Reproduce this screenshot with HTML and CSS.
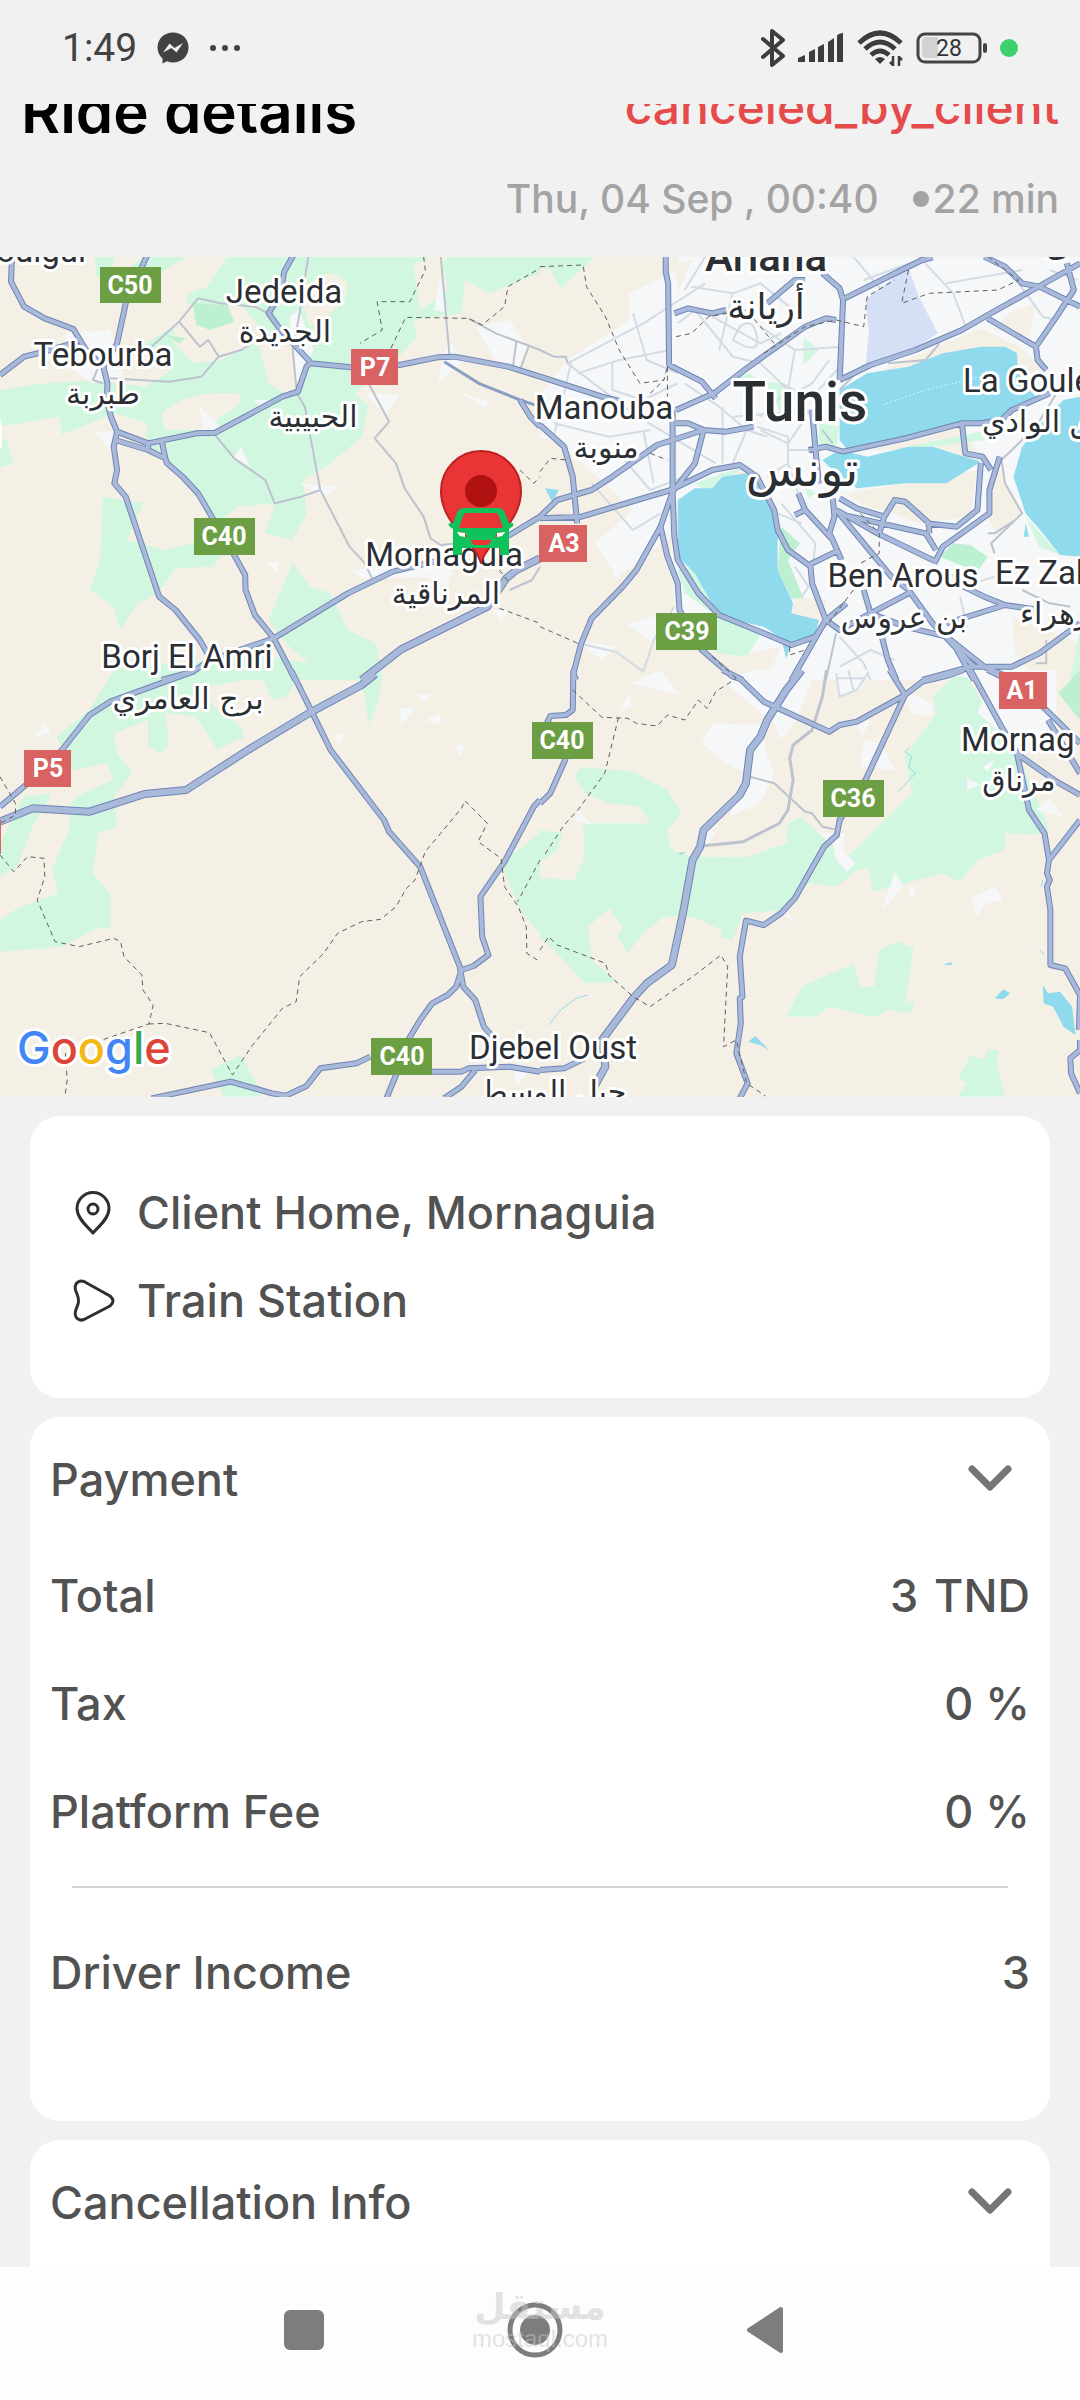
FILE: index.html
```html
<!DOCTYPE html>
<html lang="en">
<head>
<meta charset="utf-8">
<meta name="viewport" content="width=device-width, initial-scale=1">
<title>Ride details</title>
<link rel="stylesheet" href="styles.css">
</head>
<body>
<div class="status-bar">
  <div class="status-left">
    <span class="clock">1:49</span>
    <svg width="32" height="32" viewBox="0 0 32 32"><path fill="#424242" d="M16 0.500C7 .5.500 7 .500 15.500c0 4.500 2 8.500 5 11v5l4.500-2.200c2 .8 4 1.200 6 1.200 9 0 15.500-6.500 15.500-15S25 .500 16 .500z"/><path fill="#f1f1f1" d="M6 20.500l6.500-9 5 4.500L26 11l-6.500 9.500-5-4.500z"/></svg>
    <svg width="32" height="8" viewBox="0 0 32 8" fill="#424242"><circle cx="4" cy="4" r="3"/><circle cx="16" cy="4" r="3"/><circle cx="28" cy="4" r="3"/></svg>
  </div>
  <div class="status-right">
    <svg width="26" height="40" viewBox="0 0 26 40"><path d="M3 11l20 17-11 9V3l11 9L3 29" fill="none" stroke="#3d3d3d" stroke-width="4" stroke-linejoin="round" stroke-linecap="round"/></svg>
    <svg width="46" height="30" viewBox="0 0 46 30" fill="#3d3d3d"><path d="M0 29v-4l7-3v7zM11 29V19l6-3v13zM20 29V14l6-3v18zM30 29V9l6-4v24zM39 29V3q0-2 6-3v29z"/></svg>
    <svg width="48" height="38" viewBox="0 0 48 38" fill="none" stroke="#3d3d3d" stroke-width="5"><path d="M3 14Q24-6 45 14M9 20Q24 6 39 20M15 26q9-8 18 0"/><path d="M24 35l-5-5q5-4 10 0z" fill="#3d3d3d" stroke="none"/><path d="M37 27v10M43 27v10M34 33l3 3M43 28l3 3" stroke-width="2.500"/></svg>
    <svg class="battery" width="72" height="34" viewBox="0 0 72 34"><rect x="2" y="3" width="62" height="28" rx="7" fill="none" stroke="#454545" stroke-width="3"/><path d="M10 6h12v21H10q-4 0-4-4V10q0-4 4-4z" fill="#d2d2d2"/><rect x="67" y="12" width="4" height="10" rx="2" fill="#454545"/><text x="33" y="25" text-anchor="middle">28</text></svg>
    <span class="live-dot"></span>
  </div>
</div>

<main class="screen">
  <header class="ride-head">
    <div class="head-row">
      <h1>Ride details</h1>
      <span class="ride-status">canceled_by_client</span>
    </div>
    <div class="ride-meta"><span>Thu, 04 Sep , 00:40</span><span class="duration"><i class="bullet"></i>22 min</span></div>
  </header>

  <svg class="map" viewBox="0 257 1080 840" preserveAspectRatio="xMidYMid slice" role="img" aria-label="Map around Mornaguia and Tunis">
    <defs>
      <g id="roads">
        <svg class="tile" x="0" y="250" width="540" height="430" viewBox="0 0 1568 1290" preserveAspectRatio="none">
          <path d="M35 10L32 95 70 170 130 205 213 237 250 300 300 350 312 400 310 450 322 500 340 545 430 580 570 550 625 548 820 440 865 425 890 350 900 340 1020 352 1160 345 1270 322 1320 320 1475 350 1568 380M430 10L408 60 365 160 340 280 300 350M0 375L70 320 130 305 210 280 250 300M855 10L825 65 815 130 780 190 815 240 900 335M340 545L330 590 340 660 332 700 365 740 462 1040 510 1080 580 1170 605 1215M335 570L430 600 480 625 485 640 530 680 575 730 615 800 680 915 712 975 713 1020 740 1095 795 1165 858 1290M430 580V600M470 575L480 625M470 1290L560 1265 610 1230 795 1165 1010 1030 1140 965 1300 925 1480 855 1568 800M1510 450L1540 500 1568 530"/>
        </svg>
        <svg class="tile" x="540" y="250" width="540" height="430" viewBox="0 0 1568 1290" preserveAspectRatio="none">
          <path d="M365 10V65L372 100 375 345 470 395 510 445M395 480L505 430 600 355 770 230 830 205 860 210M390 190L430 175 500 190 540 180M660 160L740 90 770 90M820 70L870 115 880 150 870 390M885 145L1050 60 1110 30 1140 22M870 390L960 345 1090 300 1225 240 1300 195 1430 120 1568 40M1290 20L1350 50 1400 100 1450 110 1568 170M1300 205L1440 290 1445 330 1470 360M1440 290L1500 200 1550 120 1530 40M0 380L180 440 240 455M0 525L70 590 95 680 108 820M0 805L120 800 380 720 500 660 580 645 630 680 680 780 690 840 720 900 780 945 860 905M0 800L50 750 150 720 210 680 340 585 475 540 540 545 620 530M395 520L430 520 475 540 450 640 385 725M385 480V725L390 860 400 930 460 1030 520 1095 650 1150 730 1185 800 1160 830 1110 790 1000 785 945M385 725L350 830 280 960 240 1010 150 1105 120 1180 97 1270 105 1290M350 830L370 920 400 1000 405 1080 470 1200 560 1280 590 1290M790 480L800 600 810 700M780 600L830 590 880 605 1060 565 1225 520 1280 520 1340 510 1370 480 1480 430M1225 520L1235 610 1285 620 1310 660M1335 620L1305 720 1305 790 1170 890 1145 940M1280 640L1270 780 1210 830 1120 820M750 730L770 780 850 870 875 930M740 795L770 780M850 745L855 800 840 850 850 870M870 745L920 775 1000 800M860 780L980 850 1150 935M860 780L1020 980 1070 1020 1140 1120 1260 1250M985 850L1000 800 1030 750 1060 755 1130 820V850M880 795L1120 850 1150 900M830 1110L870 1140 960 1090 1070 1030M940 1020L960 1090 1060 1130 1180 1160 1290 1250 1380 1290M730 1290L830 1110 890 1060M990 1150L1010 1230 1035 1290M1110 1290L1250 1250 1370 1250 1450 1210 1568 1120M1230 1010L1290 1040 1350 1065 1450 1080M1180 1120L1350 1065M1200 1180L1260 1290"/>
        </svg>
        <svg class="tile" x="0" y="670" width="540" height="430" viewBox="0 0 1568 1290" preserveAspectRatio="none">
          <path d="M0 410L75 345 180 240 260 135 320 95 560 5M845 0L905 125 960 240 1115 450 1130 485 1220 590 1335 890 1345 950 1380 990 1405 1070 1430 1100M1568 390L1550 410 1465 575 1395 680 1400 800 1418 855 1375 888 1340 900 1325 950 1300 975 1255 1000 1220 1050 1185 1110 1150 1215 1120 1290M440 1285L670 1235 790 1270 830 1277 890 1248 930 1195 1035 1180 1075 1160M1250 1205L1340 1205 1360 1195 1480 1190 1568 1205M1380 1200L1340 1250 1290 1285"/>
        </svg>
        <svg class="tile" x="540" y="670" width="540" height="430" viewBox="0 0 1568 1290" preserveAspectRatio="none">
          <path d="M97 0L95 120 75 135 30 138 20 160M75 265L30 370 0 400M530 0L580 25 650 95 840 185 870 165 920 155 1060 75 1110 35 1190 15 1230 0M0 1200L70 1195 130 1165M1015 0L1060 75 945 330 870 450 862 495 825 530 740 685 700 730 650 765 598 752 580 860 588 980 580 985 583 1060 570 1150 603 1240 580 1285M1250 0L1340 170 1385 250 1420 420 1465 490 1478 570 1472 610 1480 630 1472 650 1482 720V885L1525 895 1568 975 1565 1080M1478 570L1568 450M1568 1110V1140L1540 1165 1542 1210 1568 1270M1390 255L1500 335 1568 375M1300 0L1400 50 1480 130 1568 220M1475 150L1568 310"/>
        </svg>
      </g>
      <g id="highways">
        <svg class="tile" x="0" y="250" width="540" height="430" viewBox="0 0 1568 1290" preserveAspectRatio="none">
          <path d="M1050 1290L1165 1198 1415 1070 1470 985 1500 960 1568 925"/>
        </svg>
        <svg class="tile" x="0" y="670" width="540" height="430" viewBox="0 0 1568 1290" preserveAspectRatio="none">
          <path d="M0 455L95 415 260 425 420 372 540 360 720 240 905 125 1050 45 1090 12"/>
        </svg>
        <svg class="tile" x="540" y="670" width="540" height="430" viewBox="0 0 1568 1290" preserveAspectRatio="none">
          <path d="M760 0L715 60 660 150 640 200 610 240 598 340 580 375 475 480 465 530 443 570 415 730 383 885 310 940 270 985 180 1110 190 1190 155 1255"/>
        </svg>
      </g>
    </defs>

    <rect class="land" x="0" y="257" width="1080" height="840"/>

    <!-- land cover, water and small streets, north-west -->
    <svg class="tile" x="0" y="250" width="540" height="430" viewBox="0 0 1568 1290" preserveAspectRatio="none">
      <path class="park" d="M275 20H335L320 60 280 85ZM350 70L420 20H545L480 60 400 90 370 110ZM660 20H1240L1250 100 1300 20 1568 20V70L1420 130 1350 90 1340 190 1200 210 1210 260 1150 330 1030 430 1070 470 1050 560 960 640 880 690 890 790 850 870 770 850 800 760 690 770 620 830 600 780 560 700 480 640 420 580 430 520 330 490 180 555 170 500 0 530V420L130 400 270 390 420 410 500 360 450 330 420 280 520 220 550 130 600 110ZM0 560L20 570 38 640 0 655ZM300 740L415 760 370 870 480 900 560 880 650 900 620 950 510 955 460 1030 400 1060 350 1140 330 1070 260 1020 290 930ZM850 940L900 1010 960 1030 1010 1140 1090 1180 1110 1290H340L350 1250 780 1220 900 1240 830 1180 780 1110Z"/>
      <path class="land" d="M470 490Q540 420 690 430 720 460 640 500L600 540 480 540ZM750 280L850 260 880 400 840 440 780 400ZM870 130Q950 30 1010 100L1000 160 900 230ZM520 160L700 165 780 260 640 330 560 340 500 270ZM1200 40L1280 20 1300 120 1220 180Z"/>
      <path class="wood" d="M560 160L660 165 680 215 610 240 570 225ZM480 255L540 265 520 280Z"/>
      <path class="town" d="M190 250L320 240 360 380 270 400 180 340ZM1380 230L1480 210 1530 290 1500 360 1440 330ZM1280 80L1300 190 1260 180ZM1300 270L1350 330 1270 400ZM840 200L870 180 910 300 860 400ZM580 470L650 540 590 540ZM700 590L725 650 675 630ZM870 700L985 710 940 740ZM1060 430L1160 435 1120 495ZM1340 430L1420 455 1410 475ZM775 940L810 935 805 970ZM1020 960L1320 930 1300 1010 1230 980 1050 985ZM275 545L330 545 325 610ZM1430 1080L1480 1080 1455 1115ZM740 450L820 450 760 480Z"/>
      <path class="street" d="M895 20L870 190 850 300 862 430 885 470 930 720 1015 890 1060 940 1080 985M1280 20L1305 315M440 290L520 215 575 145 640 160 740 170 780 190M520 215L580 290 605 270 635 320 700 300 780 250M320 385L490 395 585 380 635 320M625 555L680 625 770 690 798 760 875 740 930 720M1070 400L1130 515 1088 565 1150 640 1175 715 1230 800 1250 865 1280 885 1330 880M1360 205L1440 250 1530 285 1568 300M1500 270L1490 345M1535 290L1510 360M1480 1020L1545 990 1568 950M290 340L270 390 300 400"/>
      <path class="street-blue" d="M1290 335L1390 400 1510 450 1568 470"/>
    </svg>

    <!-- north-east -->
    <svg class="tile" x="540" y="250" width="540" height="430" viewBox="0 0 1568 1290" preserveAspectRatio="none">
      <path class="park" d="M0 20H160L120 60 60 115 30 60 0 50Z"/>
      <path class="town" d="M400 20H1568V1290H620L520 1180 390 1100 330 1180 250 1120 210 960 160 880 270 780 60 580 0 560V440L80 330 260 210 260 130 400 60ZM100 1170L220 1190 180 1230Z"/>
      <path class="land" d="M390 40L440 30 400 130ZM720 20H760L740 60 700 40ZM1360 190L1440 160 1420 260 1320 240ZM900 400L1280 235 1390 290 1460 350 1400 450 1200 350ZM890 730L1060 700 1270 660 1250 800 1100 820 1000 780 940 770ZM900 600L1100 540 1225 530 1290 640 1180 600ZM740 1040L830 1050 820 1120 730 1100ZM1370 1100L1568 1180V1290H1440L1380 1210ZM200 1000L380 860 390 1080 230 1130ZM560 1220L700 1190 660 1290H580ZM1330 650L1400 790 1330 860 1300 800ZM460 700L600 660 640 690 500 740Z"/>
      <path class="park" d="M765 260L810 300 765 345ZM560 380L610 370 640 395 710 400 700 490 660 420ZM810 520L870 530 860 590 810 600ZM400 960L450 950 530 1100 650 1140 600 1220 510 1210 500 1090 420 1030ZM450 700L530 670 600 650 480 720ZM1060 590L1280 545 1290 570 1140 590ZM1410 800L1510 915 1450 890ZM1568 1130L1540 1290H1568ZM760 690L800 730 780 745Z"/>
      <path class="wood" d="M700 830L755 880 720 930 765 1045 730 1045 690 960ZM1200 880L1250 885 1300 920 1270 965 1160 920Z"/>
      <path class="airport" d="M1030 80L1070 55 1100 140 1155 250 1080 300 945 345 955 250 945 150Z"/>
      <path class="water" d="M870 420L950 370 1070 350 1170 310 1280 290 1350 290 1385 310 1388 370 1440 440 1370 470 1340 510 1225 515 1060 570 900 610 870 570ZM820 630L870 600 950 620 1070 590 1140 590 1280 635 1180 700 1060 700 920 715 850 660ZM1400 590L1480 490 1520 450 1568 440V920L1510 915 1460 850 1410 790 1375 680ZM400 750L450 715 500 715 530 680 600 670 640 690 670 740 690 850 690 960 735 1060 730 1090 810 1110 800 1150 730 1185 650 1130 520 1100 450 970 400 920ZM15 715L55 720 35 755ZM1410 820L1420 860 1405 860ZM705 1185H730L715 1225Z"/>
      <path class="alley" d="M80 340L300 220 480 100M80 340L270 490 510 640M90 340L40 560M110 370L230 330 380 300M210 340V420L300 450 400 400M270 190L310 330 400 370M420 120L480 20M400 220L450 180 560 320 640 340 700 400 760 430M440 110L560 130 640 100 760 200M560 130L520 300M580 230Q620 200 630 260T560 270ZM500 200L640 280 700 250M640 230L740 300 880 290M740 300L720 420 640 500M840 330L790 400 720 440M880 340L800 430M420 400L520 470 600 540 660 560M530 470V640M600 540L560 640M630 530L720 560V640L660 680M720 600H800M560 500L800 480M640 540L720 580 760 520M700 400L790 500M910 20L1000 130M940 90L1100 30M1100 20L1200 130 1240 240M1180 100L1400 60M1390 100L1460 200 1500 210M1480 60L1560 90M220 600L320 720 420 680M150 700L270 840 350 790M300 540L330 700M40 520L200 560 320 540M720 640L760 760M700 760L800 880 790 960M740 950L780 1010 760 1040M690 790L760 820M870 1160L940 1240 960 1290M870 1250L960 1200 1030 1230M1160 960L1260 1000 1380 960M1220 1040L1240 1130M110 1180L220 1205 300 1265 330 1170 390 1070"/>
      <path class="street" d="M0 300L40 320 75 320 80 340M1340 630L1350 700 1400 790 1310 880 1320 910M1300 850H1320L1380 810M860 1150L830 1290M1010 340L1120 330 1160 280M940 345L870 420M820 540L850 580M1330 640L1440 530 1500 430M1400 1020L1480 1060 1540 1070M1440 1240H1470V1170"/>
      <path class="ferry" d="M995 465L1120 420 1300 375"/>
    </svg>

    <!-- south-west -->
    <svg class="tile" x="0" y="670" width="540" height="430" viewBox="0 0 1568 1290" preserveAspectRatio="none">
      <path class="park" d="M330 0H1110L1100 90 1070 165 1060 80 1030 20 870 20 830 80 790 90 760 20 600 50 620 110 700 170 710 200 630 240 570 140 480 130 490 220 470 250 430 230 430 150 330 190 340 250 385 310 330 380 340 470 285 490 270 610 320 670V780L290 770 180 830 0 845V750L50 715 170 670 150 600 200 480 205 400 240 370 330 330 310 280 210 300 165 200 260 120ZM70 380L150 370 90 480 50 590 0 620V520ZM610 1200L700 1155 740 1230 760 1280H650ZM1568 490L1455 580 1510 720 1568 790Z"/>
      <path class="town" d="M130 160L150 185 98 205ZM1160 115L1210 112 1165 165ZM1235 150L1280 130V165ZM1320 230L1350 222 1340 260ZM970 195L1000 190 985 225ZM1210 75L1250 72 1232 100ZM1490 1180L1540 1200 1500 1250Z"/>
    </svg>

    <!-- south-east -->
    <svg class="tile" x="540" y="670" width="540" height="430" viewBox="0 0 1568 1290" preserveAspectRatio="none">
      <path class="park" d="M100 320L120 290 270 305 370 360 410 430 370 480 380 540 440 560 600 562 715 520 720 460 760 440 860 540 900 555 1000 450 1080 370 1060 260 1150 130 1140 80 1200 20H1240L1280 90 1320 180 1400 280 1480 480 1440 495 1350 490V540L1270 570 1220 635 1170 610 1100 630 965 665 955 595 920 600 860 650 780 640 700 720 590 730 560 810 520 800 530 780 440 740 360 740 300 790 255 850 225 800 240 770 200 715 140 770 150 870 225 935 130 940 50 850 0 800V625L100 630 130 560 125 460 320 460 290 410 200 400 130 370ZM0 480L65 490 50 540 0 575ZM715 1040L760 950 910 880 930 950 970 950 985 840 1040 815 1085 835 1060 1000 1090 995 1075 1030 1010 1020 975 1042 840 1010 800 1040ZM1250 1155L1290 1170 1300 1140H1330V1200L1350 1280H1210L1240 1240 1215 1225Z"/>
      <path class="wood" d="M1568 0L1505 70 1568 150Z"/>
      <path class="town" d="M540 30L620 0H800L750 140 700 210 680 160 560 60ZM500 160L640 165 660 260 680 310 640 400 550 440 600 310 540 280 470 220ZM850 0H960L930 60 870 80ZM940 210L990 220 1030 300 930 290ZM1050 60L1140 100V140L1080 130ZM1260 0H1500V240L1480 230 1380 240 1330 180 1270 130 1290 80ZM810 490L885 490 880 540 915 580 890 605 860 570 850 520ZM1030 605L1055 650 995 720ZM1070 640L1095 665 1075 685ZM1320 650L1345 690 1295 700 1270 740 1250 685ZM350 0L405 75 265 40ZM260 70L265 110 230 120ZM110 420L150 465 100 450ZM1480 385L1520 440 1440 420ZM1240 325L1280 345 1240 360ZM1320 270L1300 305 1285 290ZM715 720L745 760 715 740ZM480 470L510 490 480 530ZM920 160L960 150 935 200Z"/>
      <path class="water" d="M1460 945L1475 970 1510 965 1545 1010 1555 1095 1520 1070 1490 1010 1462 1000ZM1320 985L1345 958 1365 970 1345 988ZM605 1115L625 1098 665 1140 640 1125ZM1170 885L1195 875V885ZM400 550L425 546 410 554Z"/>
      <path class="stream" d="M25 1065L60 1020 105 985 138 975M1040 365L1090 310 1070 290 1080 260 1060 245 1075 230M1450 840L1465 852M1460 630L1456 650"/>
      <path class="street wide" d="M832 0L820 80 790 180 735 225 725 265 735 330 720 420 695 460 590 515 470 528"/>
      <path class="street" d="M610 320L680 340 770 425 790 430 820 470 855 478"/>
      <path class="alley" d="M860 10L870 80 920 60 955 5M865 25H940M895 0L910 60"/>
    </svg>

    <use href="#roads" class="casing"/>
    <use href="#highways" class="casing-major"/>
    <use href="#roads" class="fill"/>
    <use href="#highways" class="fill-major"/>

    <!-- district borders -->
    <svg class="tile border" x="0" y="250" width="540" height="430" viewBox="0 0 1568 1290" preserveAspectRatio="none"><path d="M1230 20L1235 60 1190 155 1095 155 1110 240 1045 280M1135 295L1178 202 1360 205 1400 225 1465 170 1475 110 1568 55M1510 660L1550 700 1568 680M1450 960L1480 1000M1450 1075L1568 1120"/></svg>
    <svg class="tile border" x="540" y="250" width="540" height="430" viewBox="0 0 1568 1290" preserveAspectRatio="none"><path d="M0 50L125 45 135 110 190 200 230 300 290 400 360 390 370 350M370 350V440M320 430L360 390M395 260L440 250 490 200 600 180 680 280M650 310L770 230 860 210 940 230 950 140 1030 90M1070 60L1050 160 1130 130 1330 120 1390 90 1300 20M930 790L985 850V910L930 940M0 1130L110 1180M320 610L370 630M0 665L30 625 80 630M725 1190V1215L770 1200M910 1020L830 1130M500 1220L570 1285"/></svg>
    <svg class="tile border" x="0" y="670" width="540" height="430" viewBox="0 0 1568 1290" preserveAspectRatio="none"><path d="M0 320L45 400V435L0 460M0 555L40 605 80 560 128 565 130 620 108 690 160 815 230 830 330 805 350 815 360 860 412 915 415 960 445 1005 432 1062 310 1105 190 1150 195 1230 188 1285M432 1062L480 1060 608 1088 675 1215 730 1130 820 1015 860 995 870 920 940 850 980 790 1050 755 1105 748 1150 710 1180 655 1205 630 1235 545 1340 415 1350 392 1415 460 1388 515 1455 565 1465 650 1505 710 1528 770 1530 850 1560 870M1568 570L1503 695"/></svg>
    <svg class="tile border" x="540" y="670" width="540" height="430" viewBox="0 0 1568 1290" preserveAspectRatio="none"><path d="M95 60L180 142 255 145 280 160 340 168 370 135 420 150 460 90 485 115 510 65 570 25M228 142L188 310 110 420 70 465 10 560M0 840L25 800 50 825 190 880 200 915 270 980 320 1010 450 915 525 855 545 890 533 1130 570 1110 600 1240 655 1278"/></svg>

    <g class="place">
      <text x="86" y="262" text-anchor="end">Chouigui</text>
      <text x="284" y="303" text-anchor="middle">Jedeida</text>
      <text x="103" y="366" text-anchor="middle">Tebourba</text>
      <text x="604" y="419" text-anchor="middle">Manouba</text>
      <text x="963" y="392">La Goulette</text>
      <text x="903" y="587" text-anchor="middle">Ben Arous</text>
      <text x="995" y="584">Ez Zahra</text>
      <text x="961" y="751">Mornag</text>
      <text x="444" y="566" text-anchor="middle">Mornaguia</text>
      <text x="187" y="668" text-anchor="middle">Borj El Amri</text>
      <text x="553" y="1059" text-anchor="middle">Djebel Oust</text>
    </g>
    <g class="place place-ar" lang="ar">
      <text x="285" y="342" text-anchor="middle">الجديدة</text>
      <text x="103" y="404" text-anchor="middle">طبربة</text>
      <text x="313" y="427" text-anchor="middle">الحبيبية</text>
      <text x="606" y="458" text-anchor="middle">منوبة</text>
      <text x="766" y="319" text-anchor="middle" class="suburb-ar">أريانة</text>
      <text x="982" y="432">حلق الوادي</text>
      <text x="904" y="628" text-anchor="middle">بن عروس</text>
      <text x="1020" y="624">الزهراء</text>
      <text x="1019" y="791" text-anchor="middle">مرناق</text>
      <text x="446" y="604" text-anchor="middle">المرناقية</text>
      <text x="188" y="709" text-anchor="middle">برج العامري</text>
      <text x="553" y="1102" text-anchor="middle">جبل الوسط</text>
      <text x="-7" y="446">ا</text>
      <text x="1046" y="256">ى</text>
    </g>
    <g class="place city">
      <text x="766" y="271" text-anchor="middle" class="suburb">Ariana</text>
      <text x="800" y="421" text-anchor="middle">Tunis</text>
      <text x="802" y="486" text-anchor="middle" class="city-ar" lang="ar">تونس</text>
    </g>

    <g class="shield shield-c">
      <rect x="100" y="267" width="61" height="36"/><text x="130" y="294">C50</text>
      <rect x="194" y="518" width="61" height="37"/><text x="224" y="545">C40</text>
      <rect x="656" y="613" width="61" height="37"/><text x="687" y="640">C39</text>
      <rect x="532" y="722" width="61" height="37"/><text x="562" y="749">C40</text>
      <rect x="823" y="780" width="61" height="37"/><text x="853" y="807">C36</text>
      <rect x="371" y="1038" width="61" height="37"/><text x="402" y="1065">C40</text>
    </g>
    <g class="shield shield-p">
      <rect x="351" y="349" width="47" height="36"/><text x="375" y="376">P7</text>
      <rect x="539" y="525" width="48" height="37"/><text x="564" y="552">A3</text>
      <rect x="24" y="750" width="47" height="37"/><text x="48" y="777">P5</text>
      <rect x="999" y="672" width="48" height="37"/><text x="1022" y="699">A1</text>
      <rect x="0" y="820" width="1" height="34"/>
    </g>

    <!-- pickup pin with the car on top -->
    <path d="M481 563C474 540 441 524 441 491a40 40 0 0 1 80 0c0 33-33 49-40 72z" fill="#e93535" stroke="#bd2020" stroke-width="2"/>
    <circle cx="481" cy="491" r="16" fill="#b01111"/>
    <path fill="#0fc25c" fill-rule="evenodd" d="M464 508h34q5 0 7 5l4 10h3q2 0 1 3l-4 3v26h-9v-7h-38v7h-9v-26l-4-3q-1-3 1-3h3l4-10q2-5 7-5zM466 513q-2 0-3 3l-4 12h44l-4-12q-1-3-3-3zM457 532l3 4 7 1-2-4zM505 532l-3 4-7 1 2-4zM470 540l4 5h14l4-5z"/>
    <path fill="#fff" d="M457 532l3 4 5 1v-4zM505 532l-3 4-5 1v-4z"/>

    <text class="logo" x="17" y="1064"><tspan fill="#4285f4">G</tspan><tspan fill="#db4437">o</tspan><tspan fill="#f4b714">o</tspan><tspan fill="#4285f4">g</tspan><tspan fill="#35a853">l</tspan><tspan fill="#db4437">e</tspan></text>
  </svg>

  <div class="cards">
    <section class="card route">
      <div class="stop">
        <svg width="48" height="48" viewBox="0 0 48 48" fill="none" stroke="#2f2f2f" stroke-width="3"><path d="M24 44C20 39 8 30 8 19.500a16 16 0 0 1 32 0C40 30 28 39 24 44z" stroke-linejoin="round"/><circle cx="24" cy="20" r="5"/></svg>
        <span>Client Home, Mornaguia</span>
      </div>
      <div class="stop">
        <svg width="48" height="48" viewBox="0 0 48 48" fill="none" stroke="#2f2f2f" stroke-width="3"><path d="M15 4.500L41 19q6 5 0 10L15 42.500q-5 2-8-2.500-2-4 1-10 3-6 0-13-3-6-1-10 3-4 8-2.500z" stroke-linejoin="round"/></svg>
        <span>Train Station</span>
      </div>
    </section>

    <section class="card payment">
      <button class="card-toggle" type="button" aria-expanded="true">
        <span>Payment</span>
        <svg class="chevron" width="48" height="48" viewBox="0 0 48 48"><path d="M6 13L24 31 42 13"/></svg>
      </button>
      <dl class="fees">
        <div><dt>Total</dt><dd class="amount"><span>3</span><span>TND</span></dd></div>
        <div><dt>Tax</dt><dd>0 %</dd></div>
        <div><dt>Platform Fee</dt><dd>0 %</dd></div>
      </dl>
      <hr>
      <dl class="income">
        <div><dt>Driver Income</dt><dd>3</dd></div>
      </dl>
    </section>

    <section class="card cancellation">
      <button class="card-toggle" type="button" aria-expanded="false">
        <span>Cancellation Info</span>
        <svg class="chevron" width="48" height="48" viewBox="0 0 48 48"><path d="M6 13L24 31 42 13"/></svg>
      </button>
    </section>
  </div>
</main>

<nav class="nav-bar">
  <button type="button" aria-label="Recent apps"><svg width="56" height="56" viewBox="0 0 56 56"><rect x="8" y="8" width="40" height="40" rx="6" fill="#7d7d7d"/></svg></button>
  <button type="button" aria-label="Home"><svg width="56" height="56" viewBox="0 0 56 56"><circle cx="28" cy="28" r="25" fill="none" stroke="#7d7d7d" stroke-width="5"/><circle cx="28" cy="28" r="15" fill="#7d7d7d"/></svg></button>
  <button type="button" aria-label="Back"><svg width="56" height="56" viewBox="0 0 56 56"><path d="M11 28L43 7V49Z" fill="#7d7d7d" stroke="#7d7d7d" stroke-width="4" stroke-linejoin="round"/></svg></button>
  <div class="watermark"><span class="wm-ar" lang="ar">مستقل</span><span class="wm-en">mostaql.com</span></div>
</nav>
</body>
</html>
```
FILE: styles.css
```css
* { box-sizing: border-box; }

body {
  margin: 0;
  height: 100vh;
  display: flex;
  flex-direction: column;
  background: #f1f1f1;
  color: #525252;
  font-family: Inter, "Open Sans", sans-serif;
  font-size: 45px;
  line-height: 56px;
  font-weight: 500;
}

button {
  border: 0;
  padding: 0;
  background: none;
  font: inherit;
  color: inherit;
}

svg { display: block; flex: none; }

/* system status bar */
.status-bar {
  flex: none;
  height: 104px;
  padding: 0 62px 8px;
  display: flex;
  align-items: center;
  justify-content: space-between;
}
.status-left { display: flex; align-items: center; gap: 20px; }
.status-right { display: flex; align-items: center; gap: 12px; }
.clock { font: 400 39px/48px Roboto, sans-serif; color: #424242; }
.battery text { font: 400 23px Roboto, sans-serif; fill: #333; }
.live-dot { width: 18px; height: 18px; border-radius: 50%; background: #3bd16b; }

/* scrolling content */
.screen { flex: 1; min-height: 0; overflow: hidden; }

.ride-head {
  margin-top: -25px;
  padding: 0 21px 34px;
  display: flex;
  flex-direction: column;
  gap: 32px;
}
.head-row { display: flex; justify-content: space-between; align-items: center; line-height: 64px; }
h1 { margin: 0; font-size: 60px; font-weight: 600; color: #000; }
.ride-status { font-size: 48px; line-height: 56px; padding-bottom: 8px; color: #e54b4b; }
.ride-meta {
  display: flex;
  justify-content: flex-end;
  gap: 34px;
  font-size: 39px;
  line-height: 48px;
  color: #a3a3a3;
}
.duration { display: flex; align-items: center; gap: 4px; }
.bullet { width: 16px; height: 16px; border-radius: 50%; background: currentColor; }

/* map */
.map { width: 100%; aspect-ratio: 9 / 7; overflow: hidden; }
.tile { overflow: visible; }
.map path { stroke-linejoin: round; }
.tile path { vector-effect: non-scaling-stroke; }
.land { fill: #f4f0e5; }
.park { fill: #d2f7e1; }
.wood { fill: #bdf0d1; }
.town { fill: #f6f7f8; }
.airport { fill: #d5dff6; }
.water { fill: #90daee; }
.street { fill: none; stroke: #bcc3ce; stroke-width: 2px; }
.street.wide { stroke-width: 3px; }
.street-blue { fill: none; stroke: #8a9dc4; stroke-width: 3px; }
.alley { fill: none; stroke: #d3dbe4; stroke-width: 2px; }
.stream { fill: none; stroke: #90daee; stroke-width: 1px; }
.ferry { fill: none; stroke: #d8f2fa; stroke-width: 1px; stroke-dasharray: 2 2; }
.casing { fill: none; stroke: #6f85b5; stroke-width: 6px; }
.fill { fill: none; stroke: #a8b9da; stroke-width: 4px; }
.casing-major { fill: none; stroke: #6f85b5; stroke-width: 8px; }
.fill-major { fill: none; stroke: #a8b9da; stroke-width: 6px; }
.border path { fill: none; stroke: #5f5f5a; stroke-width: 1px; stroke-dasharray: 5 4; }

.place text {
  font: 400 33px Roboto, sans-serif;
  fill: #2b2f33;
  stroke: #fff;
  stroke-width: 6px;
  stroke-linejoin: round;
  paint-order: stroke;
}
.place-ar text { font: 400 30px "DejaVu Sans", sans-serif; }
.place-ar .suburb-ar { font-size: 36px; }
.city text { font: 500 55px Roboto, sans-serif; }
.city .city-ar { font: 400 48px "DejaVu Sans", sans-serif; }
.city .suburb { font-size: 42px; }
.shield text { font: 700 25px Roboto, sans-serif; fill: #fff; text-anchor: middle; }
.shield-c rect { fill: #6c9e43; }
.shield-p rect { fill: #d96262; }
.logo {
  font: 500 45px Inter, sans-serif;
  stroke: #fff;
  stroke-width: 6px;
  stroke-linejoin: round;
  paint-order: stroke;
}

/* cards */
.cards { display: flex; flex-direction: column; gap: 19px; padding: 19px 30px; }
.card { background: #fff; border-radius: 30px; padding: 35px 20px; }

.route { padding: 69px 39px; display: flex; flex-direction: column; gap: 32px; }
.stop { display: flex; align-items: center; gap: 20px; }

.card-toggle { width: 100%; display: flex; justify-content: space-between; align-items: center; text-align: left; padding-right: 16px; }
.chevron { fill: none; stroke: #757575; stroke-width: 7px; stroke-linecap: round; stroke-linejoin: round; }

dl { margin: 0; display: flex; flex-direction: column; gap: 52px; }
dl div { display: flex; justify-content: space-between; }
dd { margin: 0; }
.amount { display: flex; gap: 16px; }
.fees { margin-top: 60px; }
hr { margin: 46px 22px 57px; border: 0; height: 2px; background: #d2d2d2; }
.payment { padding-bottom: 120px; }
.cancellation { padding-bottom: 60px; }

/* system navigation bar */
.nav-bar {
  position: relative;
  flex: none;
  height: 133px;
  padding: 0 10px 8px 0;
  display: grid;
  grid-template-columns: repeat(3, 231px);
  justify-content: center;
  place-items: center;
  background: #fdfdfd;
}
.watermark {
  position: absolute;
  inset: 20px 0 auto;
  display: flex;
  flex-direction: column;
  align-items: center;
  color: rgba(200, 200, 200, 0.5);
  pointer-events: none;
}
.wm-ar { font: 700 36px/40px "DejaVu Sans", sans-serif; }
.wm-en { font: 500 24px/24px "Liberation Sans", sans-serif; }
```
